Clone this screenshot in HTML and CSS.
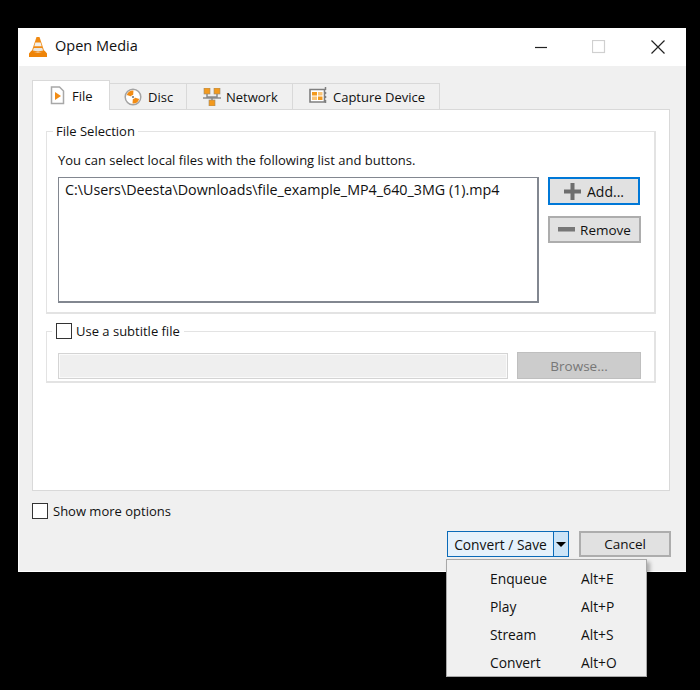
FILE: index.html
```html
<!DOCTYPE html>
<html lang="en">
<head>
    <meta charset="UTF-8">
    <meta name="viewport" content="width=device-width, initial-scale=1.0">
    <title>Open Media</title>
    <link rel="stylesheet" href="styles.css">
</head>
<body>
    <div class="window">
        <div class="titlebar">
            <svg class="app-icon" width="20" height="22" viewBox="0 0 20 22">
                <path d="M8.500 1h3l5 15h-13z" fill="#f08a12"/>
                <path d="M7.400 6.500h5.200l1.100 3.800H6.300z" fill="#f2efe9"/>
                <path d="M5.800 12h8.400l.9 2.600c-2.800 1.100-7.400 1.100-10.200 0z" fill="#e9e6e0"/>
                <path d="M3.500 14.500 1 17.500v3.500h18v-3.500l-2.500-3c-1 2.600-12 2.600-13 0z" fill="#ee8408"/>
            </svg>
            <span class="title">Open Media</span>
            <div class="window-controls">
                <svg width="14" height="14" viewBox="0 0 14 14"><path d="M2 7.500h12.500" stroke="#222" stroke-width="1.200"/></svg>
                <svg width="14" height="14" viewBox="0 0 14 14"><rect x=".5" y=".5" width="12" height="12" fill="none" stroke="#d0d0d0" stroke-width="1.200"/></svg>
                <svg width="14" height="14" viewBox="0 0 14 14"><path d="M.5.500l13 13M13.500.500l-13 13" stroke="#222" stroke-width="1.200"/></svg>
            </div>
        </div>
        <div class="content">
            <div class="tabs">
                <div class="tab tab-active tab-file">
                    <svg width="15" height="19" viewBox="0 0 15 19">
                        <path d="M1.500 1h8l4 4v12.500h-12z" fill="#fff" stroke="#a8a8a8" stroke-width="1.500"/>
                        <path d="M5 6l6 4-6 4z" fill="#f28c14"/>
                    </svg>
                    File
                </div>
                <div class="tab tab-disc">
                    <svg width="18" height="18" viewBox="0 0 18 18">
                        <circle cx="9" cy="9" r="7.800" fill="#fff" stroke="#a3a3a3" stroke-width="1.500"/>
                        <path d="M9 9 2.800 7A6.500 6.500 0 0 1 9.500 2.500z" fill="#f28c14"/>
                        <path d="M9 9l6.200 2A6.500 6.500 0 0 1 8.500 15.500z" fill="#f28c14"/>
                        <circle cx="9" cy="9" r="2" fill="#fff"/>
                        <circle cx="9" cy="9" r="1.100" fill="#777"/>
                    </svg>
                    Disc
                </div>
                <div class="tab tab-network">
                    <svg width="18" height="18" viewBox="0 0 18 18">
                        <path d="M4 6v3h10V6M9 9v4M0 10h18" fill="none" stroke="#8a8a8a" stroke-width="1.500"/>
                        <rect x="1" y="0" width="6" height="6" fill="#f39a1e" stroke="#9a8a70" stroke-width=".6"/>
                        <rect x="11" y="0" width="6" height="6" fill="#f39a1e" stroke="#9a8a70" stroke-width=".6"/>
                        <rect x="6" y="12" width="6" height="6" fill="#f39a1e" stroke="#9a8a70" stroke-width=".6"/>
                    </svg>
                    Network
                </div>
                <div class="tab tab-capture">
                    <svg class="capture-icon" width="18" height="17" viewBox="0 0 18 17">
                        <path d="M1 2.500h14.500V15H1z" fill="#fff" stroke="#7f7f7f" stroke-width="1.600"/>
                        <path d="M16.500 0v3M16.500 5v2M16.500 9v2M16.500 13v3" stroke="#7f7f7f" stroke-width="1.500"/>
                        <rect x="3" y="5" width="5" height="3.500" fill="#f39a1e"/>
                        <rect x="9" y="5" width="4.500" height="3.500" fill="#f9c477"/>
                        <rect x="3" y="9.500" width="5" height="3.500" fill="#f9c477"/>
                        <rect x="9" y="9.500" width="4.500" height="3.500" fill="#f39a1e"/>
                    </svg>
                    Capture Device
                </div>
            </div>
            <div class="pane">
                <fieldset class="group group-files">
                    <legend>File Selection</legend>
                    <p class="hint">You can select local files with the following list and buttons.</p>
                    <div class="file-row">
                        <div class="file-list">C:\Users\Deesta\Downloads\file_example_MP4_640_3MG (1).mp4</div>
                        <div class="file-buttons">
                            <div class="btn btn-focus btn-add">
                                <svg width="17" height="17" viewBox="0 0 17 17"><path d="M6.500 0h4v6.500H17v4h-6.500V17h-4v-6.500H0v-4h6.500z" fill="#6e6e6e"/></svg>
                                Add...
                            </div>
                            <div class="btn btn-remove">
                                <svg width="17" height="5" viewBox="0 0 17 5"><rect width="17" height="4.500" fill="#777"/></svg>
                                Remove
                            </div>
                        </div>
                    </div>
                </fieldset>
                <fieldset class="group group-subtitle">
                    <legend><span class="check"></span>Use a subtitle file</legend>
                    <div class="subtitle-row">
                        <div class="subtitle-input"></div>
                        <div class="btn btn-disabled">Browse...</div>
                    </div>
                </fieldset>
            </div>
            <div class="more-options"><span class="check"></span>Show more options</div>
            <div class="actions">
                <div class="split-btn">
                    <span class="split-label">Convert / Save</span>
                    <span class="split-arrow"></span>
                </div>
                <div class="btn btn-cancel">Cancel</div>
            </div>
        </div>
        <div class="menu">
            <div class="menu-item"><span>Enqueue</span><span>Alt+E</span></div>
            <div class="menu-item"><span>Play</span><span>Alt+P</span></div>
            <div class="menu-item"><span>Stream</span><span>Alt+S</span></div>
            <div class="menu-item"><span>Convert</span><span>Alt+O</span></div>
        </div>
    </div>
</body>
</html>
```

FILE: styles.css
```css
html {
    background-color: #000;
}
body {
    box-sizing: border-box;
    min-height: 690px;
    margin: 0;
    padding: 28px 0 0 18px;
    background-color: #000;
    font-family: "Open Sans", "Noto Sans", sans-serif;
    font-size: 13px;
    color: #111;
}
.window {
    position: relative;
    box-sizing: border-box;
    width: 668px;
    height: 544px;
    background-color: #f0f0f0;
    border-left: 1px solid #fff;
    border-bottom: 1px solid #fff;
}
.titlebar {
    display: flex;
    align-items: center;
    height: 38px;
    background-color: #fff;
    padding-left: 9px;
}
.title {
    margin-left: 7px;
    margin-bottom: 3px;
    font-size: 14.5px;
}
.window-controls {
    display: flex;
    gap: 45px;
    margin-left: auto;
    margin-right: 21px;
}
.content {
    padding: 14px 0 0 13px;
}
.tabs {
    display: flex;
    align-items: flex-end;
    height: 29px;
}
.tab {
    display: flex;
    align-items: center;
    box-sizing: border-box;
    height: 26px;
    border: 1px solid #d9d9d9;
    border-bottom: none;
    border-left: none;
    background-color: #f0f0f0;
}
.tab-active {
    position: relative;
    z-index: 1;
    height: 30px;
    margin-bottom: -1px;
    background-color: #fff;
    border-left: 1px solid #d9d9d9;
    gap: 7px;
    padding-left: 17px;
    width: 78px;
}
.tab-disc {
    width: 77px;
    padding-left: 14px;
    gap: 6px;
}
.tab-network {
    width: 106px;
    padding-left: 16px;
    gap: 5px;
}
.tab-capture {
    width: 147px;
    padding-left: 16px;
    gap: 6px;
}
.capture-icon {
    margin-top: -3px;
}
.pane {
    box-sizing: border-box;
    width: 638px;
    height: 382px;
    background-color: #fff;
    border: 1px solid #d9d9d9;
    padding: 11px 13px 0 13px;
}
.group {
    margin: 0;
    padding: 0 13px 0 11px;
    border: 2px solid #e3e3e3;
    border-width: 1px 2px 2px 1px;
    min-width: 0;
}
.group legend {
    display: flex;
    align-items: center;
    height: 20px;
    padding: 0 3px;
    margin-left: -5px;
}
.group-files {
    height: 193px;
    box-sizing: border-box;
}
.hint {
    margin: 9px 0 0;
    line-height: 20px;
}
.file-row {
    display: flex;
    gap: 9px;
    margin-top: 7px;
}
.file-list {
    box-sizing: border-box;
    width: 483px;
    height: 126px;
    border: 1px solid #828790;
    border-bottom-width: 2px;
    border-right-width: 2px;
    padding: 2px 6px;
    font-size: 14.3px;
}
.file-buttons {
    display: flex;
    flex-direction: column;
    gap: 11px;
}
.btn {
    display: flex;
    align-items: center;
    justify-content: center;
    box-sizing: border-box;
    background-color: #e1e1e1;
    border: 2px solid #adadad;
    font-size: 13.5px;
}
.btn-focus {
    border-color: #0078d7;
}
.btn-add {
    width: 92px;
    height: 28px;
    gap: 6px;
    font-size: 14px;
}
.btn-remove {
    width: 93px;
    height: 27px;
    gap: 5px;
}
.group-subtitle {
    height: 62px;
    box-sizing: border-box;
    margin-top: 7px;
}
.group-subtitle legend {
    margin-left: -6px;
    padding: 0 4px;
}
.check {
    box-sizing: border-box;
    width: 16px;
    height: 16px;
    background-color: #fff;
    border: 1px solid #333;
    margin-right: 4px;
    flex-shrink: 0;
}
.subtitle-row {
    display: flex;
    gap: 9px;
    margin-top: 11px;
}
.subtitle-input {
    box-sizing: border-box;
    width: 451px;
    height: 26px;
    margin-top: 1px;
    background-color: #efefef;
    border: 1px solid #d4d4d4;
    box-shadow: inset 0 0 0 1px #fafafa;
}
.btn-disabled {
    width: 124px;
    height: 27px;
    background-color: #ccc;
    border-color: #bfbfbf;
    border-width: 1px;
    color: #777;
}
.more-options {
    display: flex;
    align-items: center;
    margin-top: 12px;
    height: 16px;
}
.more-options .check {
    margin-right: 5px;
}
.actions {
    display: flex;
    gap: 10px;
    margin: 12px 0 0 415px;
}
.split-btn {
    display: flex;
    box-sizing: border-box;
    width: 122px;
    height: 26px;
    background-color: #e5f1fb;
    border: 1px solid #0a6ab8;
    font-size: 13.8px;
}
.split-label {
    display: flex;
    align-items: center;
    justify-content: center;
    width: 105px;
    border-right: 1px solid #0a6ab8;
}
.split-arrow {
    flex: 1;
    display: flex;
    align-items: center;
    justify-content: center;
    background-color: #cce4f7;
}
.split-arrow::before {
    content: "";
    border-left: 5px solid transparent;
    border-right: 5px solid transparent;
    border-top: 5px solid #000;
}
.btn-cancel {
    width: 92px;
    height: 26px;
}
.menu {
    position: absolute;
    left: 427px;
    top: 531px;
    box-sizing: border-box;
    width: 201px;
    height: 118px;
    background-color: #f0f0f0;
    border: 1px solid #a8a8a8;
    box-shadow: 3px 3px 4px rgba(0,0,0,0.3);
    padding-top: 4px;
    font-size: 13.8px;
}
.menu-item {
    display: flex;
    height: 28px;
    align-items: center;
    padding-left: 43px;
}
.menu-item span:first-child {
    width: 91px;
}
```
